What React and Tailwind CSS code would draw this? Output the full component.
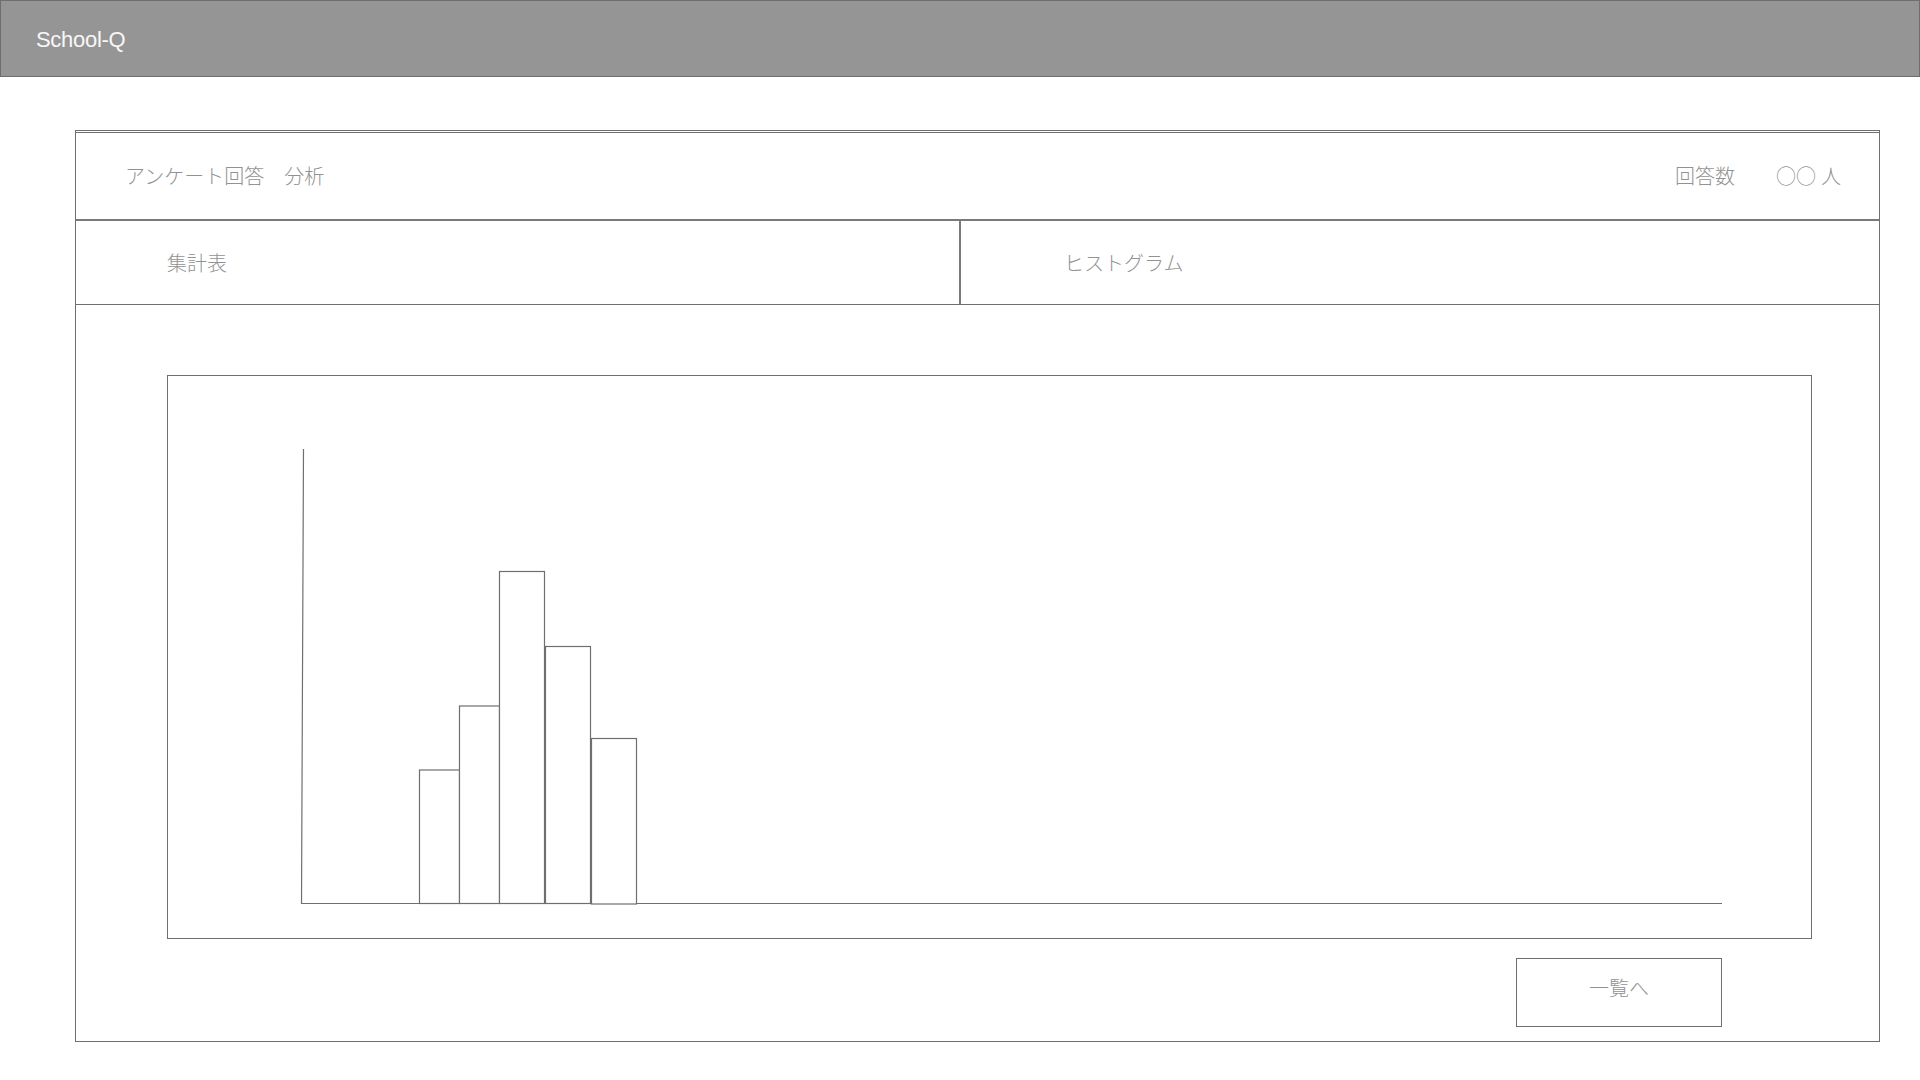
import React from 'react';

const bars = [
    { x: 251.5, w: 40, top: 394 },
    { x: 291.5, w: 40, top: 330 },
    { x: 331.5, w: 45, top: 195.5 },
    { x: 377.5, w: 45, top: 270.5 },
    { x: 423.5, w: 45, top: 362.5, bottom: 528 },
];

function Histogram() {
    return (
        <svg width="1643" height="562" viewBox="0 0 1643 562" className="block">
            {/* axes */}
            <path d="M135.5 73 L133.5 527.5 L1554 527.5" fill="none" stroke="#6f6f6f" strokeWidth="1.2" />
            {bars.map((b, i) => (
                <rect
                    key={i}
                    x={b.x}
                    y={b.top}
                    width={b.w}
                    height={(b.bottom || 527.5) - b.top}
                    fill="white"
                    stroke="#6f6f6f"
                    strokeWidth="1.2"
                />
            ))}
        </svg>
    );
}

export default function App() {
    return (
        <div className="min-h-screen w-[1920px] bg-white font-['Noto_Sans_CJK_JP',sans-serif] font-light text-[#929292]">
            {/* Header */}
            <header className="h-[77px] bg-[#959595] border border-[#6e6e6e] flex items-center pl-[35px] pt-[2px]">
                <span className="font-['Liberation_Sans',sans-serif] font-normal text-[22px] text-[#f7f7f7] tracking-[-0.3px]">School-Q</span>
            </header>

            {/* Card */}
            <div className="ml-[75px] mt-[53px] w-[1805px] h-[912px] border-x border-b border-[#6f6f6f] border-t-[3px] border-t-[#6f6f6f] [border-top-style:double] flex flex-col">
                <div className="h-[88px] border-b-2 border-[#7a7a7a] flex items-center justify-between pl-[49px] pr-[38px] text-[20px]">
                    <span>アンケート回答　分析</span>
                    <div className="flex items-center">
                        <span>回答数</span>
                        <span className="ml-[41px]">○○</span>
                        <span className="ml-[5px]">人</span>
                    </div>
                </div>

                {/* Tabs */}
                <div className="h-[84px] border-b border-[#6f6f6f] flex text-[20px]">
                    <div className="w-[885px] border-r-2 border-[#7a7a7a] flex items-center pl-[91px]">
                        <span>集計表</span>
                    </div>
                    <div className="flex-1 flex items-center pl-[103px]">
                        <span>ヒストグラム</span>
                    </div>
                </div>

                {/* Body */}
                <div className="flex-1 flex flex-col pl-[91px] pt-[70px]">
                    <div className="w-[1645px] h-[564px] border border-[#6f6f6f]">
                        <Histogram />
                    </div>
                    <div className="pl-[1349px] pt-[19px]">
                        <button className="w-[206px] h-[69px] border border-[#6f6f6f] bg-white flex items-center justify-center pb-[10px] text-[20px] font-light text-[#929292]">
                            一覧へ
                        </button>
                    </div>
                </div>
            </div>
        </div>
    );
}
